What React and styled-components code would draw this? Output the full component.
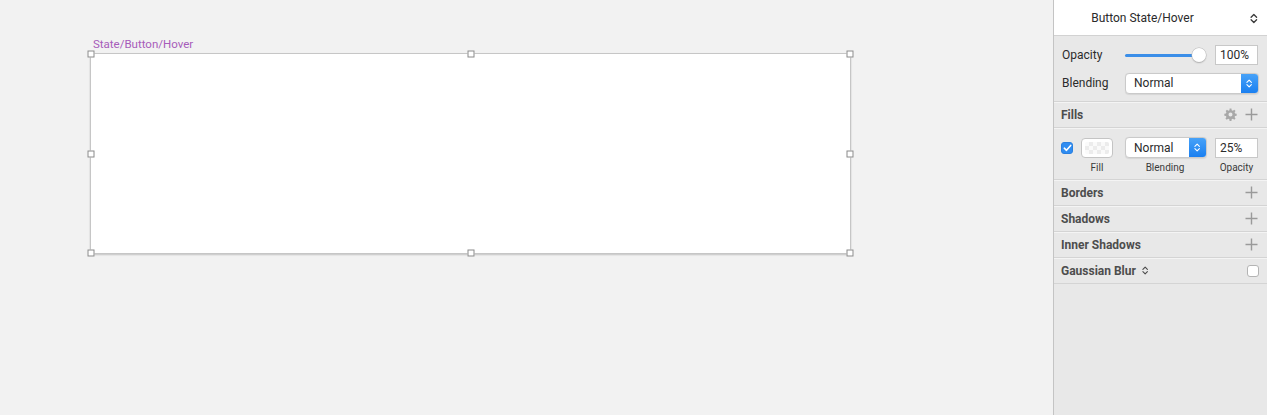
import React from "react";
import styled, { createGlobalStyle } from "styled-components";

const GlobalStyle = createGlobalStyle`
  html, body {
    margin: 0;
    padding: 0;
    height: 100%;
    background: #f2f2f2;
  }
  body {
    font-family: Roboto, "Liberation Sans", sans-serif;
    -webkit-font-smoothing: antialiased;
  }
`;

const Screen = styled.div`
  display: flex;
  width: 1267px;
  height: 415px;
  overflow: hidden;
`;

const Canvas = styled.div`
  flex: 1;
  background: #f2f2f2;
  padding: 36px 0 0 90px;
  box-sizing: border-box;
`;

const ArtboardLabel = styled.div`
  font-size: 11.5px;
  color: #a75cba;
  padding-left: 3px;
  height: 17px;
  line-height: 16px;
`;

const Artboard = styled.div`
  position: relative;
  width: 759px;
  height: 199px;
  background: #fff;
  border: 1px solid #c6c6c6;
  box-shadow: 0 1px 1.5px rgba(0, 0, 0, 0.2);
`;

const Handle = styled.span`
  position: absolute;
  width: 5px;
  height: 5px;
  background: #fff;
  border: 1px solid #8a8a8a;
  left: ${(p) => p.$x};
  top: ${(p) => p.$y};
  transform: translate(-50%, -50%);
`;

const Inspector = styled.aside`
  width: 213px;
  flex-shrink: 0;
  background: #e8e8e8;
  border-left: 1px solid #c4c4c4;
  display: flex;
  flex-direction: column;
  font-size: 12px;
  color: #2b2b2b;
`;

const Header = styled.div`
  height: 36px;
  background: #fff;
  border-bottom: 1px solid #d2d2d2;
  display: flex;
  align-items: center;
  justify-content: center;
  padding-right: 36px;
  position: relative;
  box-sizing: border-box;
  font-size: 12px;
  color: #2a2a2a;

  svg {
    position: absolute;
    right: 9px;
    top: 13px;
  }
`;

const Block = styled.div`
  border-bottom: 1px solid #d4d4d4;
  box-shadow: 0 1px 0 #f4f4f4;
  padding: ${(p) => p.$pad || "0 9px 0 8px"};
  display: flex;
  flex-direction: column;
  gap: ${(p) => p.$gap || "0"};
`;

const Row = styled.div`
  display: flex;
  align-items: center;
  height: ${(p) => p.$h || "20px"};
`;

const Label = styled.span`
  width: 63px;
  flex-shrink: 0;
`;

const Slider = styled.div`
  position: relative;
  width: 74px;
  height: 3px;
  border-radius: 2px;
  background: #3b8ee8;
  margin-right: 16px;

  &::after {
    content: "";
    position: absolute;
    right: -7px;
    top: -6px;
    width: 14px;
    height: 14px;
    border-radius: 50%;
    background: #fff;
    box-shadow: 0 0 0 0.5px #b8b8b8, 0 1px 1.5px rgba(0, 0, 0, 0.25);
  }
`;

const NumberBox = styled.div`
  width: 43px;
  height: 20px;
  box-sizing: border-box;
  background: #fff;
  border: 1px solid #c8c8c8;
  padding-left: 4px;
  display: flex;
  align-items: center;
  font-size: 12px;
`;

const Select = styled.div`
  width: ${(p) => p.$w};
  height: 21px;
  box-sizing: border-box;
  background: #fff;
  border: 1px solid #cacaca;
  border-radius: 4px;
  display: flex;
  align-items: center;
  overflow: hidden;
  box-shadow: 0 0.5px 1px rgba(0, 0, 0, 0.08);
  margin-left: ${(p) => p.$ml || "0"};
`;

const SelectText = styled.span`
  flex: 1;
  padding-left: 8px;
`;

const SelectButton = styled.span`
  width: 17px;
  height: 100%;
  background: linear-gradient(#47a2f8, #1a7ff0);
  display: flex;
  align-items: center;
  justify-content: center;
`;

const SectionRow = styled.div`
  height: 25px;
  display: flex;
  align-items: center;
  font-weight: 700;
  color: #4d4d4d;
  gap: 6px;
  margin-left: -1px;
`;

const Spacer = styled.span`
  flex: 1;
`;

const IconButton = styled.span`
  display: flex;
  align-items: center;
  justify-content: center;
  width: 14px;
  height: 14px;
  margin-left: ${(p) => p.$ml || "0"};
`;

const Checkbox = styled.span`
  width: 12px;
  height: 12px;
  box-sizing: border-box;
  border-radius: 3px;
  background: ${(p) => (p.$checked ? "#2f8cf1" : "#fff")};
  border: 1px solid ${(p) => (p.$checked ? "#2a80e0" : "#b4b4b4")};
  display: flex;
  align-items: center;
  justify-content: center;
  margin-right: ${(p) => p.$mr || "0"};
`;

const FillGrid = styled.div`
  display: grid;
  grid-template-columns: 12px 32px 86px 43px;
  column-gap: 8px;
  row-gap: 4px;
  align-items: center;
  padding: 9px 0 6px;
  margin-left: -1px;
`;

const Swatch = styled.div`
  width: 32px;
  height: 20px;
  box-sizing: border-box;
  border: 1px solid #c4c4c4;
  border-radius: 4px;
  background: #fff;
  padding: 3px;
  display: flex;

  span {
    flex: 1;
    border-radius: 2px;
    background-color: #fafafa;
    background-image: linear-gradient(45deg, #ececec 25%, transparent 25%, transparent 75%, #ececec 75%),
      linear-gradient(45deg, #ececec 25%, transparent 25%, transparent 75%, #ececec 75%);
    background-size: 8px 8px;
    background-position: 0 0, 4px 4px;
  }
`;

const Caption = styled.span`
  font-size: 10px;
  color: #3a3a3a;
  text-align: center;
  grid-column: ${(p) => p.$col};
  padding-left: ${(p) => p.$pl || "0"};
`;

const Rest = styled.div`
  flex: 1;
  background: #e8e8e8;
`;

const UpDown = ({ color = "#fff", size = 9 }) => (
  <svg width={size * 0.7} height={size} viewBox="0 0 7 10" fill="none">
    <path d="M1 3.8 L3.5 1.3 L6 3.8" stroke={color} strokeWidth="1.2" strokeLinecap="round" strokeLinejoin="round" />
    <path d="M1 6.2 L3.5 8.7 L6 6.2" stroke={color} strokeWidth="1.2" strokeLinecap="round" strokeLinejoin="round" />
  </svg>
);

const Plus = () => (
  <svg width="13" height="13" viewBox="0 0 13 13">
    <path d="M6.5 0.5 V12.5 M0.5 6.5 H12.5" stroke="#9a9a9a" strokeWidth="1.4" />
  </svg>
);

const Gear = () => (
  <svg width="13" height="13" viewBox="0 0 24 24">
    <path
      fill="#a8a8a8"
      fillRule="evenodd"
      d="M10.3 1h3.4l.5 3a8.2 8.2 0 0 1 2.2.9l2.5-1.8 2.4 2.4-1.8 2.5c.4.7.7 1.4.9 2.2l3 .5v3.4l-3 .5a8.2 8.2 0 0 1-.9 2.2l1.8 2.5-2.4 2.4-2.5-1.8a8.2 8.2 0 0 1-2.2.9l-.5 3h-3.4l-.5-3a8.2 8.2 0 0 1-2.2-.9l-2.5 1.8-2.4-2.4 1.8-2.5a8.2 8.2 0 0 1-.9-2.2l-3-.5v-3.4l3-.5c.2-.8.5-1.5.9-2.2L3.1 5.5l2.4-2.4L8 4.9c.7-.4 1.4-.7 2.2-.9zM12 8.3a3.7 3.7 0 1 0 0 7.4 3.7 3.7 0 0 0 0-7.4z"
    />
  </svg>
);

const Check = () => (
  <svg width="9" height="8" viewBox="0 0 9 8" fill="none">
    <path d="M1.3 4.2 L3.5 6.3 L7.7 1.4" stroke="#fff" strokeWidth="1.6" strokeLinecap="round" strokeLinejoin="round" />
  </svg>
);

const handles = [
  ["0", "0"], ["50%", "0"], ["100%", "0"],
  ["0", "50%"], ["100%", "50%"],
  ["0", "100%"], ["50%", "100%"], ["100%", "100%"],
];

const sections = ["Borders", "Shadows", "Inner Shadows"];

export default function App() {
  return (
    <Screen>
      <GlobalStyle />
      <Canvas>
        <ArtboardLabel>State/Button/Hover</ArtboardLabel>
        <Artboard>
          {handles.map(([x, y], i) => (
            <Handle key={i} $x={x} $y={y} />
          ))}
        </Artboard>
      </Canvas>

      <Inspector>
        <Header>
          Button State/Hover
          <UpDown color="#3a3a3a" size={11} />
        </Header>

        <Block $pad="9px 8px 8px 8px" $gap="8px">
          <Row>
            <Label>Opacity</Label>
            <Slider />
            <NumberBox>100%</NumberBox>
          </Row>
          <Row>
            <Label>Blending</Label>
            <Select $w="134px">
              <SelectText>Normal</SelectText>
              <SelectButton>
                <UpDown />
              </SelectButton>
            </Select>
          </Row>
        </Block>

        <Block>
          <SectionRow>
            Fills
            <Spacer />
            <IconButton>
              <Gear />
            </IconButton>
            <IconButton $ml="1px">
              <Plus />
            </IconButton>
          </SectionRow>
        </Block>

        <Block>
          <FillGrid>
            <Checkbox $checked>
              <Check />
            </Checkbox>
            <Swatch>
              <span />
            </Swatch>
            <Select $w="82px" $ml="4px">
              <SelectText>Normal</SelectText>
              <SelectButton>
                <UpDown />
              </SelectButton>
            </Select>
            <NumberBox>25%</NumberBox>
            <Caption $col="2">Fill</Caption>
            <Caption $col="3" $pl="2px">Blending</Caption>
            <Caption $col="4">Opacity</Caption>
          </FillGrid>
        </Block>

        {sections.map((s) => (
          <Block key={s}>
            <SectionRow>
              {s}
              <Spacer />
              <IconButton>
                <Plus />
              </IconButton>
            </SectionRow>
          </Block>
        ))}

        <Block>
          <SectionRow>
            Gaussian Blur
            <UpDown color="#4a4a4a" size={9} />
            <Spacer />
            <Checkbox $mr="-1px" />
          </SectionRow>
        </Block>

        <Rest />
      </Inspector>
    </Screen>
  );
}
